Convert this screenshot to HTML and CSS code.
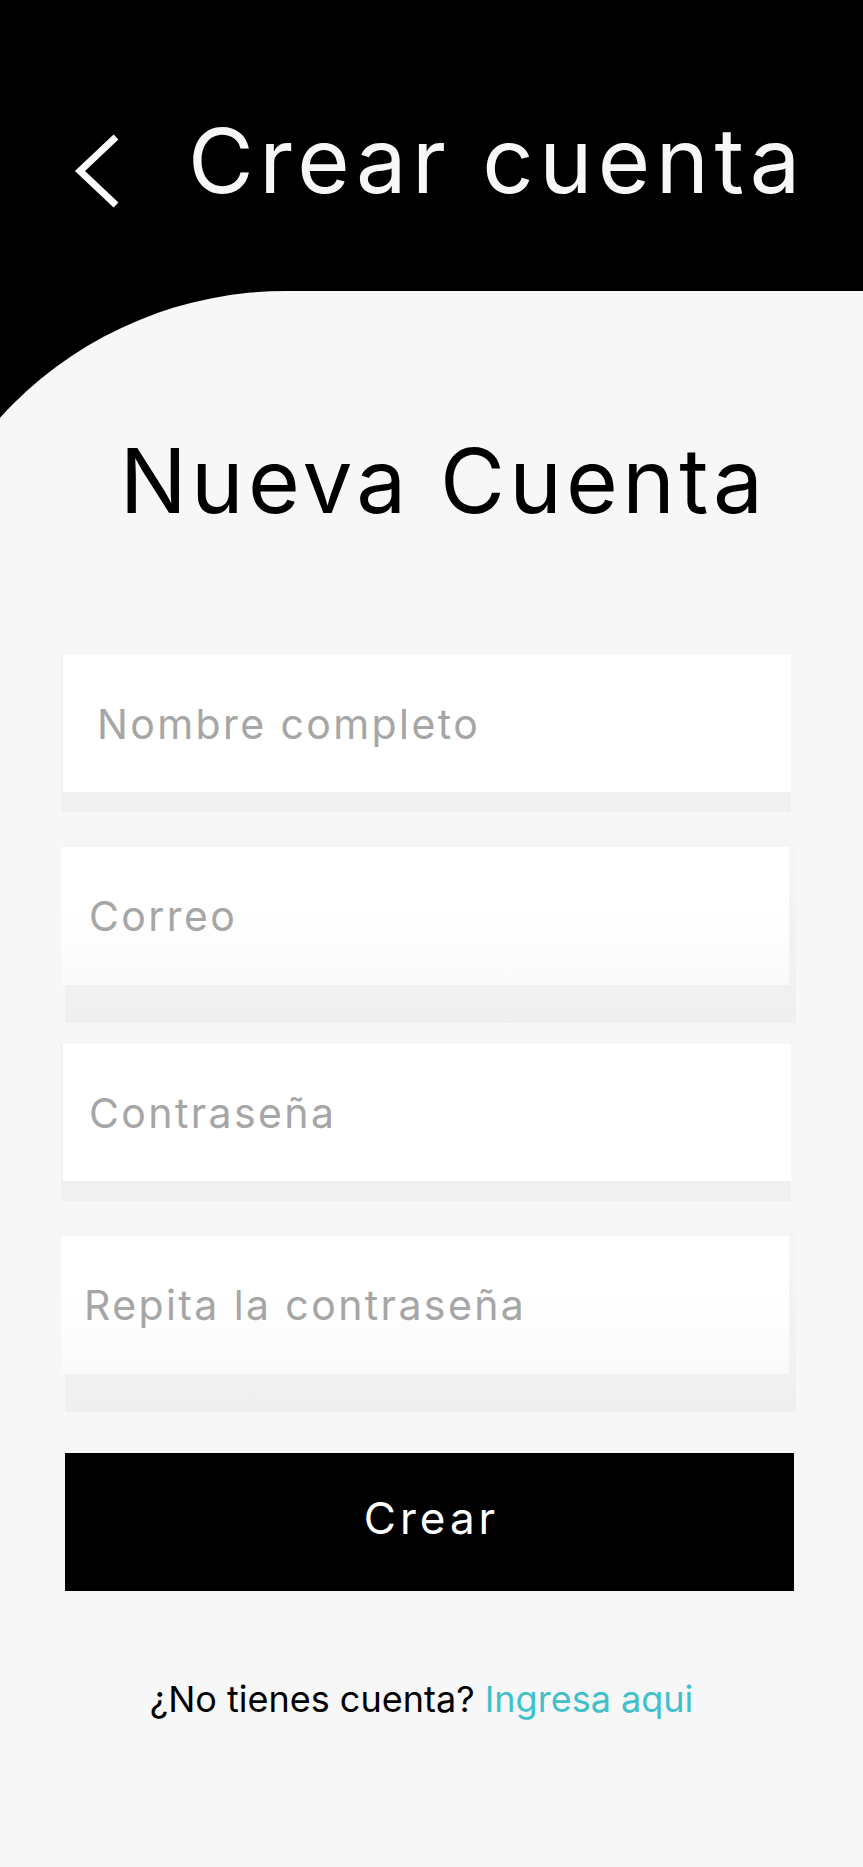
FILE: index.html
```html
<!DOCTYPE html>
<html lang="es">
<head>
<meta charset="utf-8">
<title>Crear cuenta</title>
<link rel="stylesheet" href="styles.css">
</head>
<body>
<header class="topbar">
  <svg class="back" width="60" height="90" viewBox="0 0 60 90" aria-hidden="true">
    <path d="M48 11 L12 45 L48 79" fill="none" stroke="#ffffff" stroke-width="7" stroke-linejoin="miter"/>
  </svg>
  <h1 class="topbar-title">Crear cuenta</h1>
</header>
<main class="panel">
  <h2 class="heading">Nueva Cuenta</h2>
  <form class="form">
    <div class="field field-a">
      <input class="input pad-1" type="text" placeholder="Nombre completo">
    </div>
    <div class="field field-b">
      <input class="input pad-2" type="email" placeholder="Correo">
    </div>
    <div class="field field-a">
      <input class="input pad-3" type="password" placeholder="Contraseña">
    </div>
    <div class="field field-b">
      <input class="input pad-4" type="password" placeholder="Repita la contraseña">
    </div>
    <button class="submit" type="button">Crear</button>
  </form>
  <p class="footer-text">¿No tienes cuenta? <a class="link" href="#">Ingresa aqui</a></p>
</main>
</body>
</html>
```
FILE: styles.css
```css
* { box-sizing: border-box; }
html, body {
  margin: 0;
  padding: 0;
}
body {
  background: #000000;
  overflow-x: hidden;
  font-family: Inter, "Noto Sans", sans-serif;
}
.topbar {
  height: 291px;
  display: flex;
  align-items: center;
  padding: 30px 0 0 68px;
}
.back {
  flex: none;
  margin-top: 20px;
}
.topbar-title {
  margin: 0 0 0 60px;
  color: #f7f7f7;
  font-size: 90px;
  font-weight: 400;
  line-height: 1;
  letter-spacing: 5.5px;
  white-space: nowrap;
}
.panel {
  margin-left: -100px;
  padding: 0 0 0 100px;
  background: #f7f7f7;
  border-top-left-radius: 386px;
  min-height: 1576px;
  overflow: hidden;
}
.heading {
  margin: 145px 0 0 0;
  padding-left: 24px;
  text-align: center;
  font-size: 89px;
  font-weight: 400;
  line-height: 1;
  letter-spacing: 4.3px;
  color: #000000;
}
.form {
  display: flex;
  flex-direction: column;
  padding: 0;
  margin: 130px 0 0 0;
}
.field {
  display: flex;
}
.field-a {
  width: 730px;
  margin-left: 61px;
  height: 157px;
  background: #f0f0f0;
  padding-left: 2px;
}
.field-b {
  width: 731px;
  margin-left: 65px;
  height: 187px;
  background: linear-gradient(#f6f6f6, #efefef);
  padding-top: 11px;
}
.field-a + .field-b { margin-top: 24px; }
.field-b + .field-a { margin-top: 21px; }
.input {
  width: 728px;
  height: 137px;
  border: 0;
  outline: none;
  margin: 0;
  background: #ffffff;
  font-family: inherit;
  font-size: 41px;
  letter-spacing: 2.4px;
  color: #333;
}
.field-b .input {
  margin-left: -4px;
  height: 138px;
  background: linear-gradient(#ffffff 40%, #fafafa);
}
.input::placeholder { color: #a6a6a6; opacity: 1; }
.pad-1 { padding-left: 34px; }
.pad-2 { padding-left: 28px; }
.pad-3 { padding-left: 26px; }
.pad-4 { padding-left: 23px; }
.submit {
  margin: 41px 0 0 65px;
  width: 729px;
  height: 138px;
  border: 0;
  background: #000000;
  color: #ffffff;
  font-family: inherit;
  font-size: 44px;
  letter-spacing: 4px;
  padding: 0 0 8px 4px;
}
.footer-text {
  margin: 86px 0 0 0;
  padding-right: 20px;
  text-align: center;
  font-size: 36px;
  color: #000000;
}
.link {
  color: #3fc0cb;
  text-decoration: none;
}
```
